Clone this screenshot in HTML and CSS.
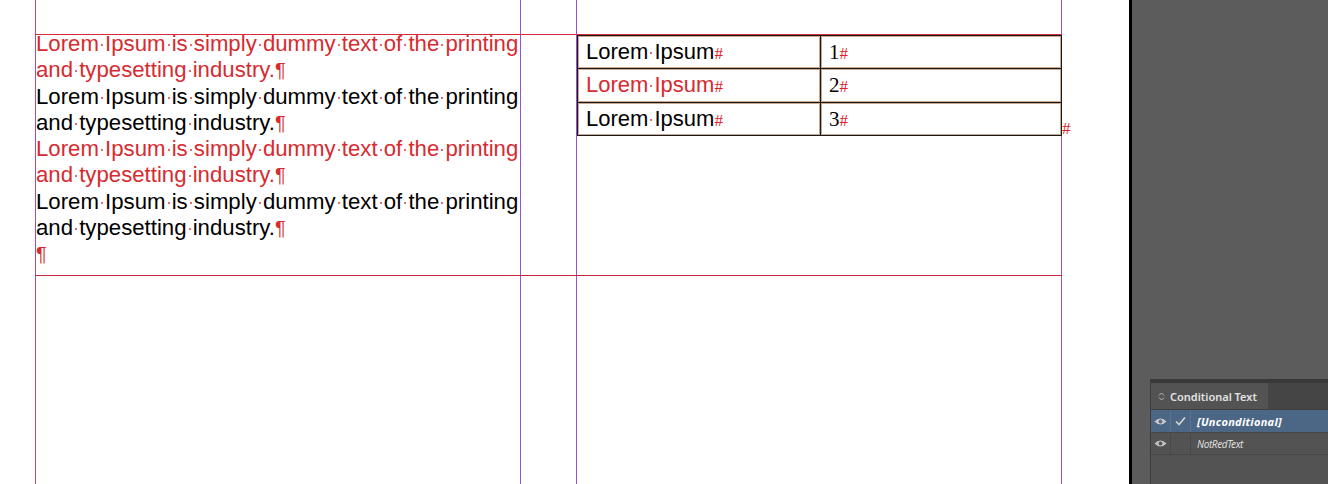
FILE: index.html
```html
<!DOCTYPE html>
<html>
<head>
<meta charset="utf-8">
<link rel="stylesheet" href="styles.css">
</head>
<body>
<div class="app">
  <div class="canvas">
    <div class="guide g1"></div>
    <div class="guide g2"></div>
    <div class="margin"></div>
    <div class="frame">
      <p class="red">Lorem<span class="s"> </span>Ipsum<span class="s"> </span>is<span class="s"> </span>simply<span class="s"> </span>dummy<span class="s"> </span>text<span class="s"> </span>of<span class="s"> </span>the<span class="s"> </span>printing<br>and<span class="s"> </span>typesetting<span class="s"> </span>industry.<span class="pil">¶</span></p>
      <p>Lorem<span class="s"> </span>Ipsum<span class="s"> </span>is<span class="s"> </span>simply<span class="s"> </span>dummy<span class="s"> </span>text<span class="s"> </span>of<span class="s"> </span>the<span class="s"> </span>printing<br>and<span class="s"> </span>typesetting<span class="s"> </span>industry.<span class="pil">¶</span></p>
      <p class="red">Lorem<span class="s"> </span>Ipsum<span class="s"> </span>is<span class="s"> </span>simply<span class="s"> </span>dummy<span class="s"> </span>text<span class="s"> </span>of<span class="s"> </span>the<span class="s"> </span>printing<br>and<span class="s"> </span>typesetting<span class="s"> </span>industry.<span class="pil">¶</span></p>
      <p>Lorem<span class="s"> </span>Ipsum<span class="s"> </span>is<span class="s"> </span>simply<span class="s"> </span>dummy<span class="s"> </span>text<span class="s"> </span>of<span class="s"> </span>the<span class="s"> </span>printing<br>and<span class="s"> </span>typesetting<span class="s"> </span>industry.<span class="pil">¶</span></p>
      <p><span class="pil">¶</span></p>
    </div>
    <div class="tablewrap">
      <table class="tbl">
        <tr><td class="c1">Lorem<span class="s"> </span>Ipsum<span class="hash">#</span></td><td class="c2">1<span class="hash">#</span></td></tr>
        <tr><td class="c1 red">Lorem<span class="s"> </span>Ipsum<span class="hash">#</span></td><td class="c2">2<span class="hash">#</span></td></tr>
        <tr><td class="c1">Lorem<span class="s"> </span>Ipsum<span class="hash">#</span></td><td class="c2">3<span class="hash">#</span></td></tr>
      </table>
      <span class="hash end">#</span>
    </div>
  </div>
  <div class="divider"></div>
  <div class="workspace">
    <div class="panel">
      <div class="panel-head">
        <div class="tab">
          <svg class="updown" width="7" height="11" viewBox="0 0 7 11"><path d="M1 4.5 L3.5 2 L6 4.5 M1 6.5 L3.5 9 L6 6.5" fill="none" stroke="#bdbdbd" stroke-width="1"/></svg>
          <span>Conditional Text</span>
        </div>
      </div>
      <div class="row sel">
        <div class="col eye"><svg width="13" height="9" viewBox="0 0 13 9"><path d="M0.5 4.5 Q6.5 -1.5 12.5 4.5 Q6.5 10.5 0.5 4.5 Z" fill="#cbcbcb"/><circle cx="6.5" cy="4.5" r="1.9" fill="#5a6f86"/></svg></div>
        <div class="col chk"><svg width="11" height="10" viewBox="0 0 11 10"><path d="M1 5.5 L4 8.5 L10 1.5" fill="none" stroke="#d2d2d2" stroke-width="1.7"/></svg></div>
        <div class="name b">[Unconditional]</div>
      </div>
      <div class="row">
        <div class="col eye"><svg width="13" height="9" viewBox="0 0 13 9"><path d="M0.5 4.5 Q6.5 -1.5 12.5 4.5 Q6.5 10.5 0.5 4.5 Z" fill="#c4c4c4"/><circle cx="6.5" cy="4.5" r="1.9" fill="#555555"/></svg></div>
        <div class="col chk"></div>
        <div class="name">NotRedText</div>
      </div>
    </div>
  </div>
</div>
</body>
</html>
```
FILE: styles.css
```css
* { box-sizing: border-box; }
html, body { margin: 0; padding: 0; }
body { width: 1328px; height: 484px; overflow: hidden; background: #5c5c5c; }
.app { display: flex; width: 1328px; height: 484px; }

.canvas {
  flex: 0 0 1129px;
  background: #ffffff;
  display: grid;
  grid-template-columns: 35px 486px 55px 486px 1fr;
  grid-template-rows: 34px 242px 1fr;
  font-family: "Liberation Sans", Arial, sans-serif;
}
.guide { grid-row: 1 / -1; border-left: 1px solid #9a4ed6; border-right: 1px solid #9a4ed6; }
.g1 { grid-column: 2; }
.g2 { grid-column: 4; }
.margin { grid-column: 2 / 5; grid-row: 2; border-top: 1px solid #d42a3a; border-bottom: 1px solid #c4273f; }

.frame {
  grid-column: 2; grid-row: 2;
  margin-top: -3px;
  padding-left: 1px;
  font-size: 22.2px;
  line-height: 26.3px;
  color: #000;
  white-space: nowrap;
  position: relative;
  z-index: 1;
}
.frame p { margin: 0; }
.red { color: #d62b30; }
.s {
  background: linear-gradient(#e86a6a, #e86a6a) no-repeat;
  background-size: 2px 2px;
  background-position: 50% 13px;
}
.pil { color: #d62b30; font-size: 20px; }

.tablewrap {
  grid-column: 4; grid-row: 2;
  align-self: start;
  padding: 1px 0 0 1px;
  display: flex;
  align-items: flex-end;
}
.tbl { flex: none; border-collapse: collapse; width: 485px; }
.tbl td {
  border: 1px solid #1a1a1a;
  box-shadow: inset 1px 1px 0 #c9a890, inset -1px -1px 0 #c9a890;
  height: 33.3px;
  padding: 2px 0 0 8px;
  font-size: 22px;
  line-height: 22px;
  vertical-align: middle;
}
.tbl td.c1 { width: 243px; font-family: "Liberation Sans", Arial, sans-serif; }
.tbl td.c2 { font-family: "Liberation Serif", "Times New Roman", serif; color: #000; font-size: 21px; }
.hash { font-family: "Liberation Serif", "Times New Roman", serif; color: #e0202a; font-size: 17px; }
.end { line-height: 18px; margin-bottom: -2px; }

.divider { flex: 0 0 3px; background: #000; }
.workspace {
  flex: 1;
  background: #5c5c5c;
  display: flex;
  flex-direction: column;
  justify-content: flex-end;
  padding-left: 18px;
}
.panel {
  height: 105px;
  background: #535353;
  border-top: 4px solid #393939;
  border-left: 1px solid #3c3c3c;
  font-family: "Noto Sans", "Open Sans", sans-serif;
}
.panel-head { height: 27px; background: #454545; display: flex; border-bottom: 1px solid #3f3f3f; }
.tab {
  width: 117px;
  background: #535353;
  display: flex;
  align-items: center;
  gap: 5px;
  padding-left: 7px;
  color: #e2e2e2;
  font-size: 11px;
  font-weight: 600;
}
.updown { flex: none; }
.row { display: flex; height: 22px; border-bottom: 1px solid #474747; }
.row.sel { background: #4c6785; height: 23px; }
.col { flex: 0 0 20px; display: flex; align-items: center; justify-content: center; border-right: 1px solid #484848; }
.row.sel .col { border-right-color: #5a7391; }
.name {
  padding-left: 6px;
  display: flex;
  align-items: center;
  font-size: 10px;
  font-style: italic;
  color: #dcdcdc;
  letter-spacing: -0.4px;
}
.name.b { font-weight: 700; color: #ffffff; font-size: 11px; letter-spacing: 0.3px; }
```
